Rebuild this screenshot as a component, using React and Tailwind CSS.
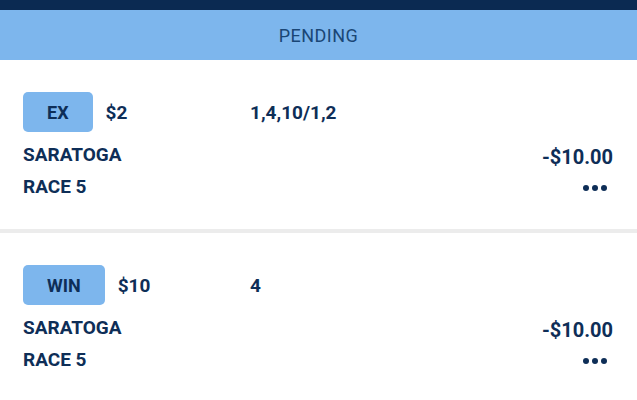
const bets = [
  { type: "EX", stake: "$2", picks: "1,4,10/1,2", track: "SARATOGA", race: "RACE 5", amount: "-$10.00" },
  { type: "WIN", stake: "$10", picks: "4", track: "SARATOGA", race: "RACE 5", amount: "-$10.00" },
];

function BetCard({ bet }) {
  return (
    <div className="h-[169px] bg-white pl-[23px] pr-[24px] pt-[32px]">
      <div className="flex h-[40px] items-center">
        <div className="flex w-[227px] items-center">
          <span className="flex h-[40px] items-center rounded-[5px] bg-[#7db6ed] px-6 text-[18px] font-bold text-[#0e2e57]">
            {bet.type}
          </span>
          <span className="ml-[13px] mt-[2px] text-[19px] font-bold">{bet.stake}</span>
        </div>
        <span className="mt-[2px] text-[19px] font-bold">{bet.picks}</span>
      </div>
      <div className="mt-[7px] flex justify-between">
        <div className="text-[19px] font-bold leading-[32px]">
          <div>{bet.track}</div>
          <div>{bet.race}</div>
        </div>
        <div className="flex flex-col items-end">
          <div className="mt-[2px] text-[20px] font-bold leading-[32px]">{bet.amount}</div>
          <div className="flex h-[30px] items-center gap-[3px] pr-[6px]">
            <span className="h-[6px] w-[6px] rounded-full bg-[#0e2e57]" />
            <span className="h-[6px] w-[6px] rounded-full bg-[#0e2e57]" />
            <span className="h-[6px] w-[6px] rounded-full bg-[#0e2e57]" />
          </div>
        </div>
      </div>
    </div>
  );
}

export default function App() {
  return (
    <div className="h-[400px] w-[637px] overflow-hidden bg-white font-['Roboto',sans-serif] text-[#0e2e57]">
      <div className="h-[10px] bg-[#0b2a52]" />
      <div className="flex h-[50px] items-center justify-center bg-[#7db6ed] text-[18px] tracking-[0.5px] text-[#1a4675]">
        PENDING
      </div>
      {bets.map((bet, i) => (
        <div key={i}>
          {i > 0 && <div className="h-[4px] bg-[#ececec]" />}
          <BetCard bet={bet} />
        </div>
      ))}
    </div>
  );
}
